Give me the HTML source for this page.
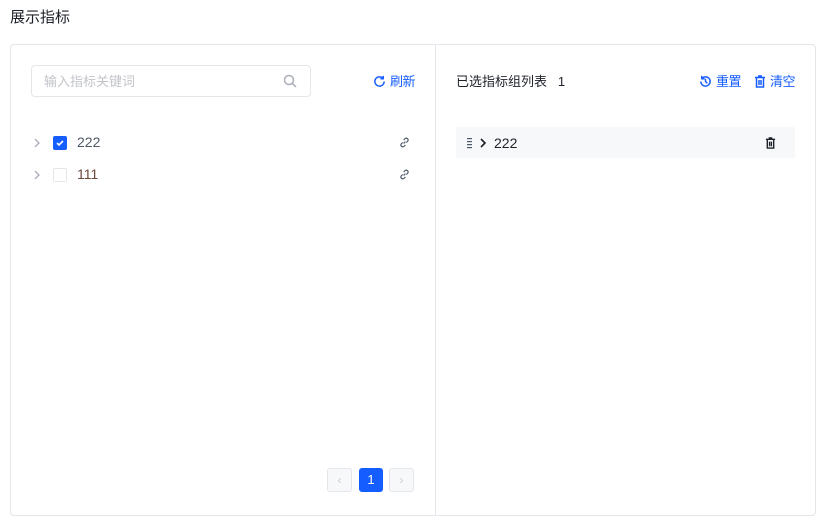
<!DOCTYPE html><html><head><meta charset="utf-8"><style>
*{box-sizing:border-box;margin:0;padding:0}
body{width:827px;height:526px;background:#fff;font-family:"Liberation Sans","Noto Sans CJK SC",sans-serif;color:#1d2129;position:relative;overflow:hidden}
.a{position:absolute}
.blue{color:#165dff}
</style></head><body>
<div class="a" style="left:10px;top:6px;font-size:15px;color:#1d2129">展示指标</div>
<div class="a" style="left:10px;top:44px;width:806px;height:472px;border:1px solid #e5e6eb;border-radius:4px"></div>
<div class="a" style="left:435px;top:45px;width:1px;height:470px;background:#e5e6eb"></div>
<div class="a" style="left:31px;top:65px;width:280px;height:32px;border:1px solid #e5e6eb;border-radius:4px"></div>
<div class="a" style="left:44px;top:71px;font-size:13px;color:#c2c4ca">输入指标关键词</div>
<svg class="a" style="left:283px;top:74px" width="14" height="14" viewBox="0 0 14 14" fill="none" stroke="#a9aeb8" stroke-width="1.5"><circle cx="6" cy="6" r="4.5"/><path d="M9.5 9.5L13 13"/></svg>
<svg class="a" style="left:373px;top:75px" width="13" height="13" viewBox="0 0 14 14" fill="none" stroke="#165dff" stroke-width="1.6"><path d="M12 7a5 5 0 1 1-1.5-3.6M11 1v3h-3"/></svg>
<div class="a blue" style="left:390px;top:71px;font-size:13px;letter-spacing:-0.5px">刷新</div>
<svg class="a" style="left:33px;top:137px" width="8" height="12" viewBox="0 0 8 12" fill="none" stroke="#a9aeb8" stroke-width="1.3"><path d="M2 2l4 4-4 4"/></svg>
<div class="a" style="left:53px;top:136px;width:14px;height:14px;background:#165dff;border-radius:2px"></div>
<svg class="a" style="left:55px;top:138px" width="10" height="10" viewBox="0 0 10 10" fill="none" stroke="#fff" stroke-width="1.6"><path d="M2 5l2 2 4-4"/></svg>
<div class="a" style="left:77px;top:134px;font-size:14px;color:#4e5969">222</div>
<svg class="a" style="left:33px;top:169px" width="8" height="12" viewBox="0 0 8 12" fill="none" stroke="#a9aeb8" stroke-width="1.3"><path d="M2 2l4 4-4 4"/></svg>
<div class="a" style="left:53px;top:168px;width:14px;height:14px;border:1px solid #e5e6eb;border-radius:2px"></div>
<div class="a" style="left:77px;top:166px;font-size:14px;color:#6b4a3a">111</div>
<svg class="a" style="left:399px;top:137px" width="11" height="11" viewBox="0 0 12 12" fill="none" stroke="#4e5969" stroke-width="1.3"><path d="M5 7l2-2M4 6L2.5 7.5a2 2 0 0 0 2.8 2.8L7 8.8M8 6l1.5-1.5a2 2 0 0 0-2.8-2.8L5 3.2"/></svg>
<svg class="a" style="left:399px;top:169px" width="11" height="11" viewBox="0 0 12 12" fill="none" stroke="#4e5969" stroke-width="1.3"><path d="M5 7l2-2M4 6L2.5 7.5a2 2 0 0 0 2.8 2.8L7 8.8M8 6l1.5-1.5a2 2 0 0 0-2.8-2.8L5 3.2"/></svg>
<div class="a" style="left:327px;top:468px;width:25px;height:24px;background:#f7f8fa;border:1px solid #e5e6eb;border-radius:3px;color:#c9cdd4;font-size:12px;text-align:center;line-height:22px">‹</div>
<div class="a" style="left:359px;top:468px;width:24px;height:24px;background:#165dff;border-radius:3px;color:#fff;font-size:13px;text-align:center;line-height:24px">1</div>
<div class="a" style="left:389px;top:468px;width:25px;height:24px;background:#f7f8fa;border:1px solid #e5e6eb;border-radius:3px;color:#c9cdd4;font-size:12px;text-align:center;line-height:22px">›</div>
<div class="a" style="left:456px;top:71px;font-size:13px">已选指标组列表&nbsp;&nbsp;&nbsp;1</div>
<svg class="a" style="left:699px;top:75px" width="13" height="13" viewBox="0 0 14 14" fill="none" stroke="#165dff" stroke-width="1.6"><path d="M2 7a5 5 0 1 0 1.5-3.6M3 1v3h3M7 4v3l2 2"/></svg>
<div class="a blue" style="left:716px;top:71px;font-size:13px;letter-spacing:-0.5px">重置</div>
<svg class="a" style="left:754px;top:75px" width="12" height="13" viewBox="0 0 12 13" fill="none" stroke="#165dff" stroke-width="1.5"><path d="M1 2.5h10M4 1h4M2.5 2.5v9.5h7V2.5M5 5v5M7 5v5"/></svg>
<div class="a blue" style="left:770px;top:71px;font-size:13px;letter-spacing:-0.5px">清空</div>
<div class="a" style="left:456px;top:127px;width:339px;height:31px;background:#f7f8fa"></div>
<svg class="a" style="left:467px;top:138px" width="6" height="11" viewBox="0 0 6 11" fill="#4e5969"><rect x="0" y="0" width="5" height="1.2"/><rect x="0" y="3" width="5" height="1.2"/><rect x="0" y="6" width="5" height="1.2"/><rect x="0" y="9" width="5" height="1.2"/></svg>
<svg class="a" style="left:479px;top:138px" width="8" height="10" viewBox="0 0 8 10" fill="none" stroke="#1d2129" stroke-width="1.6"><path d="M2 1l4 4-4 4"/></svg>
<div class="a" style="left:494px;top:135px;font-size:14px;color:#1d2129">222</div>
<svg class="a" style="left:765px;top:137px" width="11" height="12" viewBox="0 0 12 13" fill="none" stroke="#1d2129" stroke-width="1.5"><path d="M1 2.5h10M4 1h4M2.5 2.5v9.5h7V2.5M5 5v5M7 5v5"/></svg>
</body></html>
